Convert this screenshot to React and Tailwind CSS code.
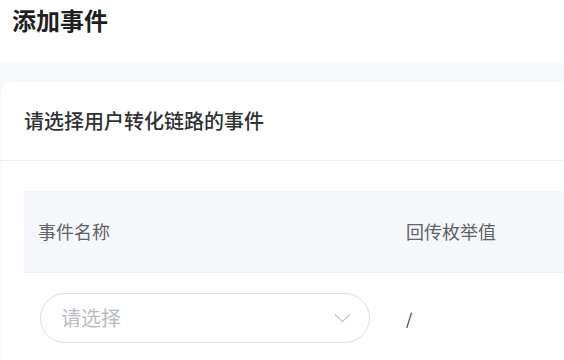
import React, { useState } from "react";

export default function App() {
  const [value] = useState("");

  return (
    <div
      className="w-[564px] h-[360px] overflow-hidden bg-white"
      style={{ fontFamily: '"Noto Sans CJK SC", "Noto Sans", sans-serif' }}
    >
      {/* Page title */}
      <div className="h-[63px] pl-[12px] pt-[5px]">
        <h1 className="text-[24px] leading-[30px] font-bold text-[#1f1f1f]">添加事件</h1>
      </div>

      {/* Gray page body */}
      <div className="bg-[#f7f8fa] pt-[19px] pl-px h-[297px]">
        <div className="bg-white rounded-tl-[10px] h-full">
          {/* Card header */}
          <div className="h-[79px] flex items-center px-[23px] border-b border-[#ebeef5]">
            <span className="text-[20px] font-medium text-[#303133]">请选择用户转化链路的事件</span>
          </div>

          {/* Table */}
          <div className="pt-[30px] pl-[23px]">
            <div className="grid grid-cols-[368px_1fr] h-[82px] bg-[#f5f7fa] border-b border-[#ebeef5] items-center">
              <div className="pl-[14px] text-[18px] text-[#606266]">事件名称</div>
              <div className="pl-[14px] text-[18px] text-[#606266]">回传枚举值</div>
            </div>
            <div className="grid grid-cols-[368px_1fr] items-center pt-[20px]">
              <div className="pl-[16px] pr-[22px]">
                <button
                  type="button"
                  className="w-full h-[50px] rounded-full border border-[#dcdfe6] flex items-center justify-between pl-[20px] pr-[18px] bg-white"
                >
                  <span className="text-[20px] text-[#b8bcc4]">{value || "请选择"}</span>
                  <svg width="17" height="10" viewBox="0 0 17 10" fill="none">
                    <path d="M1 1.5L8.5 8.5L16 1.5" stroke="#c0c4cc" strokeWidth="1.1" />
                  </svg>
                </button>
              </div>
              <div className="pl-[14px] text-[16px] text-[#303133]">/</div>
            </div>
          </div>
        </div>
      </div>
    </div>
  );
}
